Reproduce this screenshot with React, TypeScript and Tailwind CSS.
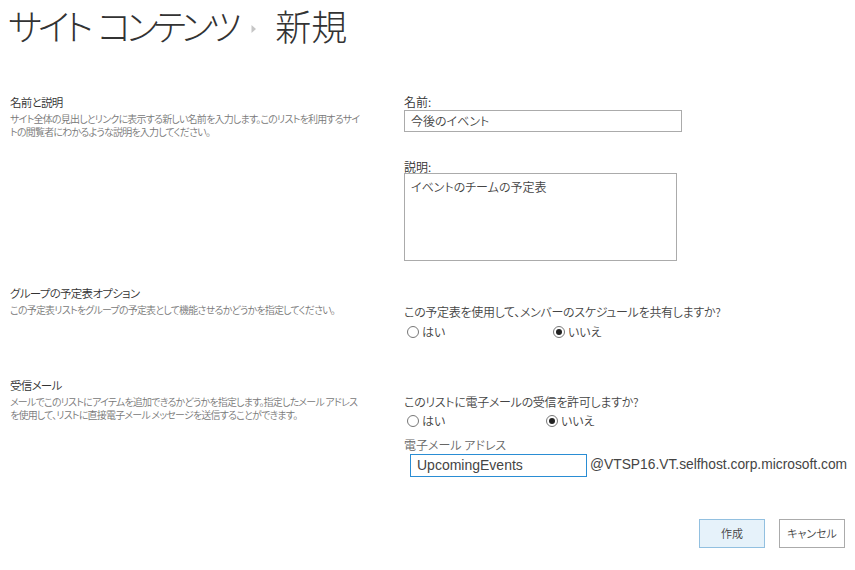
const jp = "font-['Noto_Sans_CJK_JP','Noto_Sans',sans-serif] [font-feature-settings:'palt']"

function Radio({ checked, label }: { checked?: boolean; label: string }) {
  return (
    <label className="flex items-center gap-[3px]">
      <span className="w-[12px] h-[12px] rounded-full border border-[#777] flex items-center justify-center bg-white">
        {checked && <span className="w-[6px] h-[6px] rounded-full bg-[#222]" />}
      </span>
      <span className="text-[12px] text-[#444]">{label}</span>
    </label>
  )
}

function Section({ title, desc, children, className }: {
  title: string
  desc: React.ReactNode
  children: React.ReactNode
  className?: string
}) {
  return (
    <div className={'flex ' + (className ?? '')}>
      <div className="w-[404px] pl-[10px] pr-4 shrink-0">
        <div className="text-[11.5px] leading-[16px] text-[#333] tracking-[-0.7px] whitespace-nowrap">{title}</div>
        <div className="text-[10px] leading-[13px] text-[#777] mt-[2px] tracking-[-0.8px] whitespace-nowrap">{desc}</div>
      </div>
      <div className="flex-1">{children}</div>
    </div>
  )
}

export default function App() {
  return (
    <div className={'w-[855px] h-[570px] bg-white overflow-hidden font-[350] ' + jp}>
      {/* Title */}
      <div className="flex items-center pl-[8px] pt-[1px] h-[48px] text-[36px] leading-[46px] text-[#333] font-light whitespace-nowrap">
        <span className="tracking-[-4px]">サイト</span>
        <span className="ml-[8px] tracking-[-5px]">コンテンツ</span>
        <svg width="6" height="10" viewBox="0 0 6 10" className="ml-[15px] mr-[18px] mt-[8px] shrink-0">
          <path d="M0.5 1 L5 5 L0.5 9 Z" fill="#c6c6c6" />
        </svg>
        <span>新規</span>
      </div>

      <Section
        className="mt-[46px]"
        title="名前と説明"
        desc={<>サイト全体の見出しとリンクに表示する新しい名前を入力します。このリストを利用するサイ<br />トの閲覧者にわかるような説明を入力してください。</>}
      >
        <div className="text-[12px] leading-[16px] text-[#333]">名前:</div>
        <div className="w-[278px] h-[22px] border border-[#ababab] px-[6px] flex items-center text-[12px] text-[#444]">
          今後のイベント
        </div>
        <div className="text-[12px] leading-[16px] text-[#333] mt-[27px]">説明:</div>
        <div className="w-[273px] h-[88px] border border-[#ababab] mt-[-2px] px-[6px] pt-[4px] text-[12px] leading-[18px] text-[#444]">
          イベントのチームの予定表
        </div>
      </Section>

      <Section
        className="mt-[24px]"
        title="グループの予定表オプション"
        desc="この予定表リストをグループの予定表として機能させるかどうかを指定してください。"
      >
        <div className="text-[12px] leading-[16px] text-[#444] mt-[19px] tracking-[-0.3px] whitespace-nowrap">この予定表を使用して、メンバーのスケジュールを共有しますか?</div>
        <div className="flex items-center mt-[3px] pl-[3px]">
          <div className="w-[146px]"><Radio label="はい" /></div>
          <Radio checked label="いいえ" />
        </div>
      </Section>

      <Section
        className="mt-[36px]"
        title="受信メール"
        desc={<>メールでこのリストにアイテムを追加できるかどうかを指定します。指定したメール アドレス<br />を使用して、リストに直接電子メール メッセージを送信することができます。</>}
      >
        <div className="text-[12px] leading-[16px] text-[#444] mt-[17px] tracking-[-0.3px] whitespace-nowrap">このリストに電子メールの受信を許可しますか?</div>
        <div className="flex items-center mt-[2px] pl-[3px]">
          <div className="w-[139px]"><Radio label="はい" /></div>
          <Radio checked label="いいえ" />
        </div>
        <div className="text-[12px] leading-[16px] text-[#666] mt-[7px]">電子メール アドレス</div>
        <div className="flex items-center mt-[1px]">
          <div className="ml-[6px] w-[177px] h-[23px] border border-[#2a8dd4] px-[6px] flex items-center text-[14px] text-[#444] font-['Liberation_Sans',sans-serif]">
            UpcomingEvents
          </div>
          <span className="ml-[3px] text-[13.8px] text-[#444] font-['Liberation_Sans',sans-serif] whitespace-nowrap">@VTSP16.VT.selfhost.corp.microsoft.com</span>
        </div>
      </Section>

      {/* Buttons */}
      <div className="flex justify-end gap-[14px] pr-[10px] mt-[42px]">
        <button className="w-[66px] h-[29px] border border-[#92c0e0] bg-[#e6f2fa] text-[11px] text-[#444]">作成</button>
        <button className="w-[66px] h-[29px] border border-[#ababab] bg-white text-[11px] text-[#444]">キャンセル</button>
      </div>
    </div>
  )
}
